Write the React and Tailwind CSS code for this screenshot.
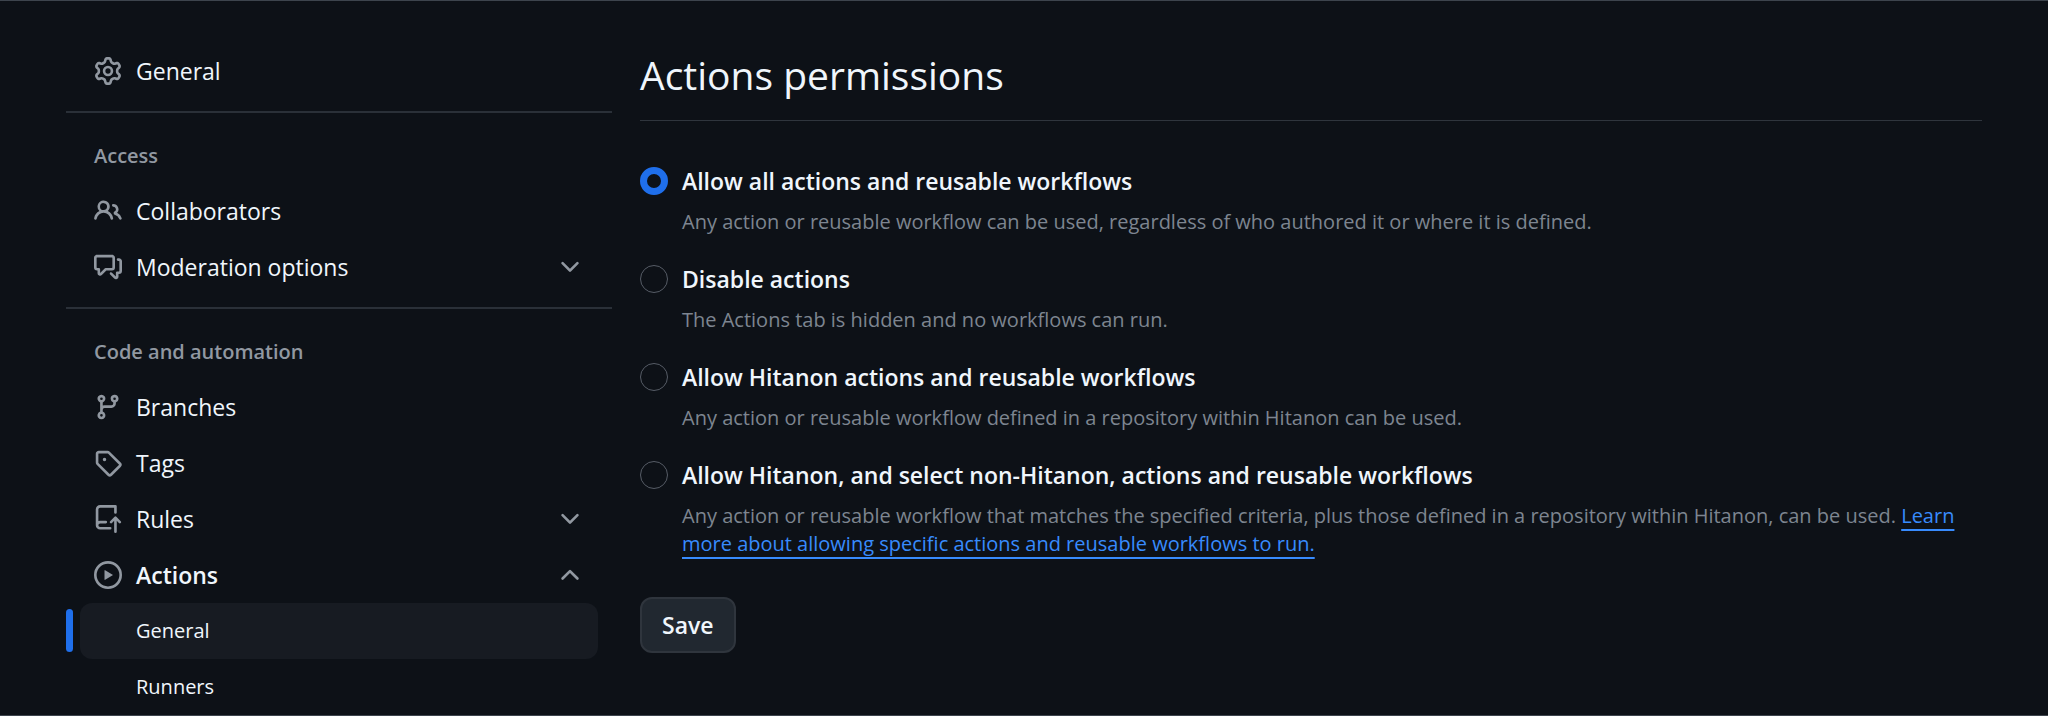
import { useState } from 'react';

const ICONS = {
  gear: 'M8 0a8.2 8.2 0 0 1 .701.031C9.444.095 9.99.645 10.16 1.29l.288 1.107c.018.066.079.158.212.224.231.114.454.243.668.386.123.082.233.09.299.071l1.103-.303c.644-.176 1.392.021 1.82.63.27.385.506.792.704 1.218.315.675.111 1.422-.364 1.891l-.814.806c-.049.048-.098.147-.088.294.016.257.016.515 0 .772-.01.147.038.246.088.294l.814.806c.475.469.679 1.216.364 1.891a7.977 7.977 0 0 1-.704 1.217c-.428.61-1.176.807-1.82.63l-1.102-.302c-.067-.019-.177-.011-.3.071a5.909 5.909 0 0 1-.668.386c-.133.066-.194.158-.211.224l-.29 1.106c-.168.646-.715 1.196-1.458 1.26a8.006 8.006 0 0 1-1.402 0c-.743-.064-1.289-.614-1.458-1.26l-.289-1.106c-.018-.066-.079-.158-.212-.224a5.738 5.738 0 0 1-.668-.386c-.123-.082-.233-.09-.299-.071l-1.103.303c-.644.176-1.392-.021-1.82-.63a8.12 8.12 0 0 1-.704-1.218c-.315-.675-.111-1.422.363-1.891l.815-.806c.05-.048.098-.147.088-.294a6.214 6.214 0 0 1 0-.772c.01-.147-.038-.246-.088-.294l-.815-.806C.635 6.045.431 5.298.746 4.623a7.92 7.92 0 0 1 .704-1.217c.428-.61 1.176-.807 1.82-.63l1.102.302c.067.019.177.011.3-.071.214-.143.437-.272.668-.386.133-.066.194-.158.211-.224l.29-1.106C6.009.645 6.556.095 7.299.03 7.53.01 7.764 0 8 0Zm-.571 1.525c-.036.003-.108.036-.137.146l-.289 1.105c-.147.561-.549.967-.998 1.189-.173.086-.34.183-.5.29-.417.278-.97.423-1.529.27l-1.103-.303c-.109-.03-.175.016-.195.045-.22.312-.412.644-.573.99-.014.031-.021.11.059.19l.815.806c.411.406.562.957.53 1.456a4.709 4.709 0 0 0 0 .582c.032.499-.119 1.05-.53 1.456l-.815.806c-.081.08-.073.159-.059.19.162.346.353.677.573.989.02.03.085.076.195.046l1.102-.303c.56-.153 1.113-.008 1.53.27.161.107.328.204.501.29.447.222.85.629.997 1.189l.289 1.105c.029.109.101.143.137.146a6.6 6.6 0 0 0 1.142 0c.036-.003.108-.036.137-.146l.289-1.105c.147-.561.549-.967.998-1.189.173-.086.34-.183.5-.29.417-.278.97-.423 1.529-.27l1.103.303c.109.029.175-.016.195-.045.22-.313.411-.644.573-.99.014-.031.021-.11-.059-.19l-.815-.806c-.411-.406-.562-.957-.53-1.456a4.709 4.709 0 0 0 0-.582c-.032-.499.119-1.05.53-1.456l.815-.806c.081-.08.073-.159.059-.19a6.464 6.464 0 0 0-.573-.989c-.02-.03-.085-.076-.195-.046l-1.102.303c-.56.153-1.113.008-1.53-.27a4.44 4.44 0 0 0-.501-.29c-.447-.222-.85-.629-.997-1.189l-.289-1.105c-.029-.11-.101-.143-.137-.146a6.6 6.6 0 0 0-1.142 0ZM11 8a3 3 0 1 1-6 0 3 3 0 0 1 6 0ZM9.5 8a1.5 1.5 0 1 0-3.001.001A1.5 1.5 0 0 0 9.5 8Z',
  people: 'M2 5.5a3.5 3.5 0 1 1 5.898 2.549 5.508 5.508 0 0 1 3.034 4.084.75.75 0 1 1-1.482.235 4 4 0 0 0-7.9 0 .75.75 0 0 1-1.482-.236A5.507 5.507 0 0 1 3.102 8.05 3.493 3.493 0 0 1 2 5.5ZM11 4a3.001 3.001 0 0 1 2.22 5.018 5.01 5.01 0 0 1 2.56 3.012.749.749 0 0 1-.885.954.752.752 0 0 1-.549-.514 3.507 3.507 0 0 0-2.522-2.372.75.75 0 0 1-.574-.73v-.352a.75.75 0 0 1 .416-.672A1.5 1.5 0 0 0 11 5.5.75.75 0 0 1 11 4Zm-5.5-.5a2 2 0 1 0-.001 3.999A2 2 0 0 0 5.5 3.5Z',
  discussion: 'M1.75 1h8.5c.966 0 1.75.784 1.75 1.75v5.5A1.75 1.75 0 0 1 10.25 10H7.061l-2.574 2.573A1.458 1.458 0 0 1 2 11.543V10h-.25A1.75 1.75 0 0 1 0 8.25v-5.5C0 1.784.784 1 1.75 1ZM1.5 2.75v5.5c0 .138.112.25.25.25h1a.75.75 0 0 1 .75.75v2.19l2.72-2.72a.749.749 0 0 1 .53-.22h3.5a.25.25 0 0 0 .25-.25v-5.5a.25.25 0 0 0-.25-.25h-8.5a.25.25 0 0 0-.25.25Zm13 2a.25.25 0 0 0-.25-.25h-.5a.75.75 0 0 1 0-1.5h.5c.966 0 1.75.784 1.75 1.75v5.5A1.75 1.75 0 0 1 14.25 12H14v1.543a1.458 1.458 0 0 1-2.487 1.03L9.22 12.28a.749.749 0 0 1 .326-1.275.749.749 0 0 1 .734.215l2.22 2.22v-2.19a.75.75 0 0 1 .75-.75h1a.25.25 0 0 0 .25-.25Z',
  branch: 'M9.5 3.25a2.25 2.25 0 1 1 3 2.122V6A2.5 2.5 0 0 1 10 8.5H6a1 1 0 0 0-1 1v1.128a2.251 2.251 0 1 1-1.5 0V5.372a2.25 2.25 0 1 1 1.5 0v1.836A2.493 2.493 0 0 1 6 7h4a1 1 0 0 0 1-1v-.628A2.25 2.25 0 0 1 9.5 3.25Zm-6 0a.75.75 0 1 0 1.5 0 .75.75 0 0 0-1.5 0Zm8.25-.75a.75.75 0 1 0 0 1.5.75.75 0 0 0 0-1.5ZM4.25 12a.75.75 0 1 0 0 1.5.75.75 0 0 0 0-1.5Z',
  tag: 'M1 7.775V2.75C1 1.784 1.784 1 2.75 1h5.025c.464 0 .91.184 1.238.513l6.25 6.25a1.75 1.75 0 0 1 0 2.474l-5.026 5.026a1.75 1.75 0 0 1-2.474 0l-6.25-6.25A1.752 1.752 0 0 1 1 7.775Zm1.5 0c0 .066.026.13.073.177l6.25 6.25a.25.25 0 0 0 .354 0l5.025-5.025a.25.25 0 0 0 0-.354l-6.25-6.25a.25.25 0 0 0-.177-.073H2.75a.25.25 0 0 0-.25.25ZM6 5a1 1 0 1 1 0 2 1 1 0 0 1 0-2Z',
  rules: 'M1 2.5A2.5 2.5 0 0 1 3.5 0h8.75a.75.75 0 0 1 .75.75v3.5a.75.75 0 0 1-1.5 0V1.5h-8a1 1 0 0 0-1 1v6.708A2.493 2.493 0 0 1 3.5 9h3.25a.75.75 0 0 1 0 1.5H3.5a1 1 0 0 0 0 2h5.75a.75.75 0 0 1 0 1.5H3.5A2.5 2.5 0 0 1 1 11.5Zm13.23 7.79h-.001l-1.224-1.224v6.184a.75.75 0 0 1-1.5 0V9.066L10.28 10.29a.75.75 0 0 1-1.06-1.061l2.505-2.504a.75.75 0 0 1 1.06 0L15.29 9.23a.751.751 0 0 1-.018 1.042.751.751 0 0 1-1.042.018Z',
  play: 'M8 0a8 8 0 1 1 0 16A8 8 0 0 1 8 0ZM1.5 8a6.5 6.5 0 1 0 13 0 6.5 6.5 0 0 0-13 0Zm4.879-2.773 4.264 2.559a.25.25 0 0 1 0 .428l-4.264 2.559A.25.25 0 0 1 6 10.559V5.442a.25.25 0 0 1 .379-.215Z',
  down: 'M12.78 5.22a.749.749 0 0 1 0 1.06l-4.25 4.25a.749.749 0 0 1-1.06 0L3.22 6.28a.749.749 0 1 1 1.06-1.06L8 8.939l3.72-3.719a.749.749 0 0 1 1.06 0Z',
  up: 'M3.22 10.53a.749.749 0 0 1 0-1.06l4.25-4.25a.749.749 0 0 1 1.06 0l4.25 4.25a.749.749 0 1 1-1.06 1.06L8 6.811 4.28 10.53a.749.749 0 0 1-1.06 0Z',
};

function Icon({ name }) {
  return (
    <svg viewBox="0 0 16 16" className="size-7 shrink-0 fill-[#9198a1]" aria-hidden="true">
      <path d={ICONS[name]} />
    </svg>
  );
}

const ROW = 'flex h-14 w-full items-center gap-3.5 rounded-xl px-3.5 text-left text-[23px]';

function NavLink({ icon, children }) {
  return (
    <li>
      <a href="#" className={ROW}>
        <Icon name={icon} />
        {children}
      </a>
    </li>
  );
}

function NavGroup({ icon, label, open = false, children }) {
  return (
    <li>
      <button type="button" aria-expanded={open} className={ROW}>
        <Icon name={icon} />
        <span className={open ? 'flex-1 font-semibold' : 'flex-1'}>{label}</span>
        <Icon name={open ? 'up' : 'down'} />
      </button>
      {children}
    </li>
  );
}

function SubLink({ current = false, children }) {
  return (
    <li className="relative">
      {current && <span className="absolute top-1.5 -left-3.5 h-[43px] w-[7px] rounded-md bg-[#1f6feb]" />}
      <a
        href="#"
        aria-current={current ? 'page' : undefined}
        className={
          current
            ? 'flex h-14 items-center rounded-xl bg-[#171b22] pl-14 text-xl'
            : 'flex h-14 items-center rounded-xl pl-14 text-xl'
        }
      >
        {children}
      </a>
    </li>
  );
}

function Divider() {
  return <hr className="my-3 border-t-2 border-[#2a3038]" />;
}

function SectionTitle({ children }) {
  return <h3 className="px-7 pt-4 pb-3 text-xl/[30px] font-semibold text-[#9198a1]">{children}</h3>;
}

const OPTIONS = [
  {
    id: 'all',
    label: 'Allow all actions and reusable workflows',
    note: 'Any action or reusable workflow can be used, regardless of who authored it or where it is defined.',
  },
  {
    id: 'disabled',
    label: 'Disable actions',
    note: 'The Actions tab is hidden and no workflows can run.',
  },
  {
    id: 'local',
    label: 'Allow Hitanon actions and reusable workflows',
    note: 'Any action or reusable workflow defined in a repository within Hitanon can be used.',
  },
  {
    id: 'select',
    label: 'Allow Hitanon, and select non-Hitanon, actions and reusable workflows',
    note: 'Any action or reusable workflow that matches the specified criteria, plus those defined in a repository within Hitanon, can be used. ',
    link: 'Learn more about allowing specific actions and reusable workflows to run.',
  },
];

export default function App() {
  const [policy, setPolicy] = useState('all');

  return (
    <div className="flex gap-7 border-y border-[#3d444d] bg-[#0d1117] px-[66px] font-['Open_Sans','Noto_Sans',sans-serif] text-[#f0f6fc]">
      <nav aria-label="Repository settings" className="w-[546px] shrink-0 pt-[42px]">
        <ul className="px-3.5">
          <NavLink icon="gear">General</NavLink>
        </ul>
        <Divider />
        <SectionTitle>Access</SectionTitle>
        <ul className="px-3.5">
          <NavLink icon="people">Collaborators</NavLink>
          <NavGroup icon="discussion" label="Moderation options" />
        </ul>
        <Divider />
        <SectionTitle>Code and automation</SectionTitle>
        <ul className="px-3.5">
          <NavLink icon="branch">Branches</NavLink>
          <NavLink icon="tag">Tags</NavLink>
          <NavGroup icon="rules" label="Rules" />
          <NavGroup icon="play" label="Actions" open>
            <ul>
              <SubLink current>General</SubLink>
              <SubLink>Runners</SubLink>
            </ul>
          </NavGroup>
        </ul>
      </nav>

      <main className="min-w-0 flex-1 pt-11">
        <h2 className="border-b border-[#2f353d] pb-[15px] text-[39px]/[60px]">Actions permissions</h2>
        <form className="pt-[42px]" onSubmit={(event) => event.preventDefault()}>
          <div className="flex flex-col gap-[25px]">
            {OPTIONS.map(({ id, label, note, link }) => (
              <div key={id} className="flex gap-3.5">
                <input
                  type="radio"
                  id={id}
                  name="policy"
                  checked={policy === id}
                  onChange={() => setPolicy(id)}
                  aria-describedby={`${id}-note`}
                  className="mt-1 size-7 shrink-0 appearance-none rounded-full border border-[#565c66] checked:border-7 checked:border-[#1f6feb]"
                />
                <div className="min-w-0 flex-1">
                  <label htmlFor={id} className="block text-[23px]/[36px] font-semibold">
                    {label}
                  </label>
                  <p id={`${id}-note`} className="pt-[9px] text-xl/[28px] text-[#7d8590]">
                    {note}
                    {link && (
                      <a href="#" className="text-[#388bfd] underline decoration-2 underline-offset-[6px]">
                        {link}
                      </a>
                    )}
                  </p>
                </div>
              </div>
            ))}
          </div>
          <button
            type="submit"
            className="mt-[39px] h-14 rounded-xl border-2 border-[#2f353d] bg-[#212830] px-5 text-[23px] font-semibold"
          >
            Save
          </button>
        </form>
      </main>
    </div>
  );
}
